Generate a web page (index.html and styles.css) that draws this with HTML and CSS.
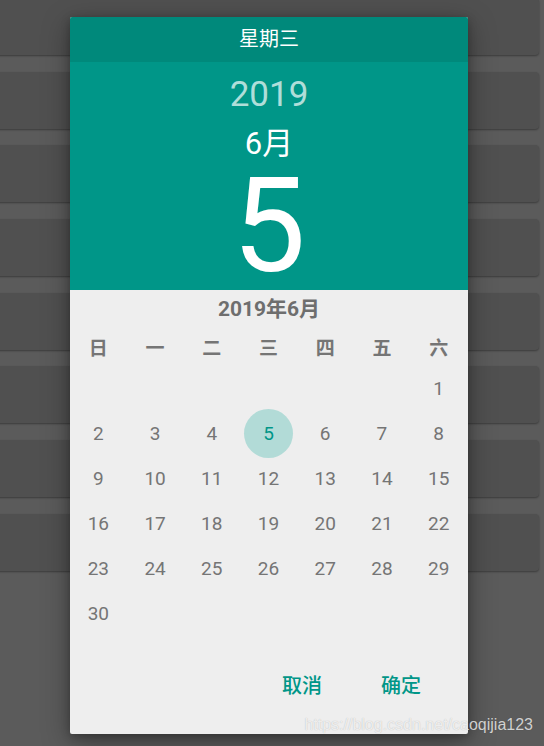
FILE: index.html
```html
<!DOCTYPE html>
<html lang="zh-CN">
<head>
<meta charset="utf-8">
<title>日期选择</title>
<link rel="stylesheet" href="styles.css">
</head>
<body>
<div class="screen">
  <div class="cards">
    <div class="card"></div>
    <div class="card"></div>
    <div class="card"></div>
    <div class="card"></div>
    <div class="card"></div>
    <div class="card"></div>
    <div class="card"></div>
    <div class="card"></div>
  </div>

  <div class="dialog">
    <div class="dlg-header">星期三</div>
    <div class="dlg-hero">
      <div class="hero-year">2019</div>
      <div class="hero-month">6月</div>
      <div class="hero-day">5</div>
    </div>
    <div class="dlg-body">
      <div class="cal-title">2019年6月</div>
      <div class="cal-grid weekdays">
        <div class="wd">日</div><div class="wd">一</div><div class="wd">二</div><div class="wd">三</div><div class="wd">四</div><div class="wd">五</div><div class="wd">六</div>
      </div>
      <div class="cal-grid days">
        <div class="d"></div><div class="d"></div><div class="d"></div><div class="d"></div><div class="d"></div><div class="d"></div><div class="d">1</div>
        <div class="d">2</div><div class="d">3</div><div class="d">4</div><div class="d"><span class="sel">5</span></div><div class="d">6</div><div class="d">7</div><div class="d">8</div>
        <div class="d">9</div><div class="d">10</div><div class="d">11</div><div class="d">12</div><div class="d">13</div><div class="d">14</div><div class="d">15</div>
        <div class="d">16</div><div class="d">17</div><div class="d">18</div><div class="d">19</div><div class="d">20</div><div class="d">21</div><div class="d">22</div>
        <div class="d">23</div><div class="d">24</div><div class="d">25</div><div class="d">26</div><div class="d">27</div><div class="d">28</div><div class="d">29</div>
        <div class="d">30</div><div class="d"></div><div class="d"></div><div class="d"></div><div class="d"></div><div class="d"></div><div class="d"></div>
      </div>
      <div class="actions">
        <div class="btn">取消</div>
        <div class="btn">确定</div>
      </div>
    </div>
  </div>

  <div class="watermark">https://blog.csdn.net/caoqijia123</div>
</div>
</body>
</html>
```

FILE: styles.css
```css
html, body {
  margin: 0;
  padding: 0;
}
body {
  width: 544px;
  height: 746px;
  overflow: hidden;
  background: #5b5b5b;
  font-family: Roboto, "Noto Sans CJK SC", sans-serif;
}
.screen {
  position: relative;
  width: 544px;
  height: 746px;
  overflow: hidden;
}
.cards {
  display: flex;
  flex-direction: column;
  gap: 16.7px;
  margin-top: -2px;
  margin-left: -6px;
  margin-right: 5px;
}
.card {
  height: 57px;
  background: #505050;
  border-radius: 4px;
  box-shadow: 0 1px 2px rgba(0, 0, 0, 0.35);
}

.dialog {
  position: absolute;
  left: 70px;
  top: 17px;
  width: 398px;
  height: 717px;
  display: flex;
  flex-direction: column;
  border-radius: 2px;
  overflow: hidden;
  background: #eeeeee;
  box-shadow: 0 8px 28px rgba(0, 0, 0, 0.35), 0 2px 8px rgba(0, 0, 0, 0.25);
}
.dlg-header {
  height: 45px;
  line-height: 45px;
  background: #00897b;
  color: #ffffff;
  font-size: 20px;
  text-align: center;
}
.dlg-hero {
  height: 228px;
  box-sizing: border-box;
  padding-top: 13px;
  background: #009688;
  color: #ffffff;
  text-align: center;
  display: flex;
  flex-direction: column;
}
.hero-year {
  font-size: 35px;
  line-height: 40px;
  color: rgba(255, 255, 255, 0.7);
}
.hero-month {
  font-size: 31px;
  line-height: 58px;
}
.hero-day {
  font-size: 131px;
  line-height: 107px;
}
.dlg-body {
  flex: 1;
  display: flex;
  flex-direction: column;
}
.cal-title {
  height: 38px;
  line-height: 38px;
  text-align: center;
  font-size: 21px;
  font-weight: 700;
  color: #6e6e6e;
}
.cal-grid {
  display: grid;
  grid-template-columns: repeat(7, 1fr);
  padding: 0 1px 0 0;
}
.wd {
  height: 37.5px;
  display: flex;
  align-items: center;
  justify-content: center;
  font-size: 19px;
  font-weight: 700;
  color: #757575;
}
.d {
  height: 45px;
  display: flex;
  align-items: center;
  justify-content: center;
  font-size: 19px;
  color: #757575;
}
.sel {
  flex: none;
  width: 49px;
  height: 49px;
  border-radius: 50%;
  background: #b2dbd7;
  color: #009688;
  display: flex;
  align-items: center;
  justify-content: center;
}
.actions {
  display: flex;
  justify-content: flex-end;
  gap: 19px;
  margin-top: 26.5px;
  padding-right: 27px;
}
.btn {
  width: 80px;
  height: 48px;
  line-height: 48px;
  text-align: center;
  font-size: 20px;
  font-weight: 500;
  color: #009688;
}
.watermark {
  position: absolute;
  right: 11px;
  top: 717px;
  font-family: "Liberation Sans", Arial, sans-serif;
  font-size: 16px;
  line-height: 16px;
  color: rgba(255, 255, 255, 0.75);
  text-shadow: 0 0 1px rgba(0, 0, 0, 0.25);
  white-space: nowrap;
}
```
